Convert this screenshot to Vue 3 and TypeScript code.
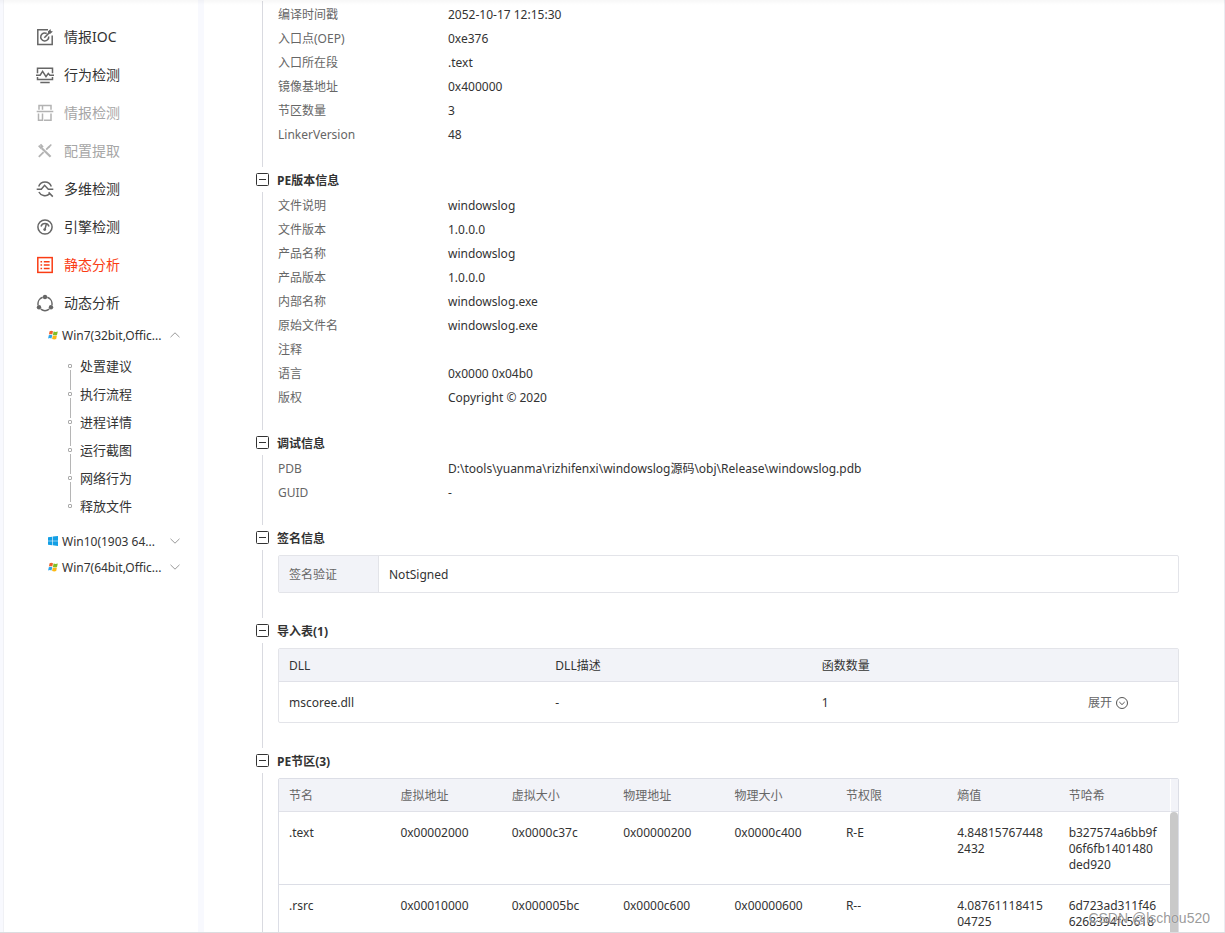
<script setup lang="ts">
import { reactive } from 'vue'

type Pair = [string, string]

interface NavItem {
  label: string
  icon: string
  state?: 'active' | 'disabled'
}

const navItems: NavItem[] = [
  { label: '情报IOC', icon: 'target' },
  { label: '行为检测', icon: 'monitor' },
  { label: '情报检测', icon: 'scan', state: 'disabled' },
  { label: '配置提取', icon: 'tools', state: 'disabled' },
  { label: '多维检测', icon: 'search' },
  { label: '引擎检测', icon: 'gauge' },
  { label: '静态分析', icon: 'list', state: 'active' },
  { label: '动态分析', icon: 'cycle' },
]

const environments = reactive([
  {
    name: 'Win7(32bit,Offic...',
    os: 'win7',
    open: true,
    children: ['处置建议', '执行流程', '进程详情', '运行截图', '网络行为', '释放文件'],
  },
  { name: 'Win10(1903 64...', os: 'win10', open: false, children: [] as string[] },
  { name: 'Win7(64bit,Offic...', os: 'win7', open: false, children: [] as string[] },
])

const basics: Pair[] = [
  ['编译时间戳', '2052-10-17 12:15:30'],
  ['入口点(OEP)', '0xe376'],
  ['入口所在段', '.text'],
  ['镜像基地址', '0x400000'],
  ['节区数量', '3'],
  ['LinkerVersion', '48'],
]

const sections = reactive([
  {
    title: 'PE版本信息',
    kind: 'pairs',
    open: true,
    pairs: [
      ['文件说明', 'windowslog'],
      ['文件版本', '1.0.0.0'],
      ['产品名称', 'windowslog'],
      ['产品版本', '1.0.0.0'],
      ['内部名称', 'windowslog.exe'],
      ['原始文件名', 'windowslog.exe'],
      ['注释', ''],
      ['语言', '0x0000 0x04b0'],
      ['版权', 'Copyright © 2020'],
    ] as Pair[],
  },
  {
    title: '调试信息',
    kind: 'pairs',
    open: true,
    pairs: [
      ['PDB', 'D:\\tools\\yuanma\\rizhifenxi\\windowslog源码\\obj\\Release\\windowslog.pdb'],
      ['GUID', '-'],
    ] as Pair[],
  },
  { title: '签名信息', kind: 'sign', open: true, pairs: [] as Pair[] },
  { title: '导入表(1)', kind: 'imports', open: true, pairs: [] as Pair[] },
  { title: 'PE节区(3)', kind: 'segments', open: true, pairs: [] as Pair[] },
])

const segmentHeads = ['节名', '虚拟地址', '虚拟大小', '物理地址', '物理大小', '节权限', '熵值', '节哈希']
const segments = [
  ['.text', '0x00002000', '0x0000c37c', '0x00000200', '0x0000c400', 'R-E', '4.848157674482432', 'b327574a6bb9f06f6fb1401480ded920'],
  ['.rsrc', '0x00010000', '0x000005bc', '0x0000c600', '0x00000600', 'R--', '4.0876111841504725', '6d723ad311f466268394fc5618'],
]
</script>

<template>
  <div class="page">
    <aside class="sidebar">
      <nav>
        <a v-for="item in navItems" :key="item.label" href="#" class="nav-item" :class="item.state">
          <svg class="nav-icon" viewBox="0 0 18 18" aria-hidden="true">
            <g v-if="item.icon === 'target'">
              <path d="M12 1.800H1.800v14.600h14.400V7.500" />
              <path d="M10.700 5.500A4 4 0 1 0 12.700 8.500" />
              <path d="M8.300 9.800l5.600-5.700" />
              <path class="solid" d="M11.900 3.600l2.600-2.500.4 1.900 2 .5-2.500 2.300-2.100-.3z" />
            </g>
            <g v-else-if="item.icon === 'monitor'">
              <path d="M1.500 7.200V2.200h15v5M1.500 11v2.500h15V11" />
              <path d="M0 9.200h4.100l2.500-3.900 3.400 5.400 2.300-3.300 1.600 1.800H18M4.300 16.500h9.400" />
            </g>
            <g v-else-if="item.icon === 'scan'">
              <path d="M3 5.700V1.500h12v4.200M6.500 1.500v4.200M.7 7.500h16.600M2.500 9.500v6.700h4V9.500M8 16.200h7V9.500" />
            </g>
            <g v-else-if="item.icon === 'tools'">
              <path d="M5.800 6.200l8.800 8.600" stroke-width="2.200" />
              <path d="M2.700 3.700l2.200 2.200 1.500-1.500-2-2.100" stroke-width="1.800" />
              <path d="M7.600 10.200l-4.800 4.600M10.200 7.600l2.700-2.800" stroke-width="1.800" />
              <path class="solid" d="M11.800 4.700l3-2.600 1 1-2.500 3z" />
            </g>
            <g v-else-if="item.icon === 'search'">
              <path d="M2.700 6.500a6.700 6.700 0 0 1 12.600 0M2.900 12a6.800 6.800 0 0 0 10.400 2.200M.7 9.300h4.600l3.300-4 3.700 4h5M12.600 12.400l4.200 4.200" />
            </g>
            <g v-else-if="item.icon === 'gauge'">
              <circle cx="9" cy="9" r="7.100" />
              <path d="M5 8.500A4.200 4.200 0 0 1 13 8.500M10.200 6.500l-1.300 5" />
              <circle class="solid" cx="8.700" cy="11.600" r="1.400" />
            </g>
            <g v-else-if="item.icon === 'list'">
              <rect x="1.800" y="1.600" width="14.400" height="14.800" />
              <path d="M4.500 5.700h1.600M7.800 5.700h5.800M4.500 9h1.600M7.800 9h5.800M4.500 12.400h1.600M7.800 12.400h5.800" />
            </g>
            <g v-else>
              <path d="M6.700 3.200A7 7 0 0 0 2.100 11M11.300 3.200a7 7 0 0 1 4.600 7.800M4.800 15.200a7 7 0 0 0 8.400 0" />
              <circle class="solid" cx="9" cy="3" r="2.200" />
              <circle class="solid" cx="3" cy="13.300" r="2.200" />
              <circle class="solid" cx="15" cy="13.300" r="2.200" />
            </g>
          </svg>
          <span>{{ item.label }}</span>
        </a>

        <div v-for="env in environments" :key="env.name">
          <button type="button" class="env" :aria-expanded="env.open" @click="env.open = !env.open">
            <svg v-if="env.os === 'win7'" class="os" viewBox="0 0 10 10" aria-hidden="true">
              <path fill="#f0632c" d="M1.600 1.200Q3.200.2 5 1.200L4.300 4.500Q2.600 3.600.9 4.500z" />
              <path fill="#82bd25" d="M5.600 1.600q2 .9 4.200 0L9 5Q7 5.800 4.900 4.900z" />
              <path fill="#2ba5ea" d="M.8 5.200q1.700-.9 3.400 0L3.500 8.500Q1.800 7.600.1 8.500z" />
              <path fill="#fcb813" d="M4.800 5.600q2 .9 4.100 0L8.200 9Q6.100 9.800 4.100 8.900z" />
            </svg>
            <svg v-else class="os" viewBox="0 0 10 10" aria-hidden="true">
              <path fill="#139fe5" d="M0 1.300l4.200-.6v4H0zM4.800.6L10 0v4.700H4.800zM0 5.300h4.200v4L0 8.700zM4.800 5.300H10V10l-5.200-.7z" />
            </svg>
            <span class="env-name">{{ env.name }}</span>
            <svg class="chevron" viewBox="0 0 10 6" aria-hidden="true">
              <path :d="env.open ? 'M.5 5.200L5 .8l4.500 4.400' : 'M.5.8L5 5.200 9.500.8'" />
            </svg>
          </button>
          <ul v-if="env.open && env.children.length" class="steps">
            <li v-for="child in env.children" :key="child"><a href="#">{{ child }}</a></li>
          </ul>
        </div>
      </nav>
    </aside>

    <main class="content">
      <section>
        <div class="body">
          <dl>
            <div v-for="[k, v] in basics" :key="k" class="pair"><dt>{{ k }}</dt><dd>{{ v }}</dd></div>
          </dl>
        </div>
      </section>

      <section v-for="s in sections" :key="s.title">
        <h2>
          <button type="button" class="toggle" :aria-expanded="s.open" @click="s.open = !s.open">
            <svg viewBox="0 0 13 13" aria-hidden="true">
              <rect x=".5" y=".5" width="12" height="12" rx="1" />
              <path d="M3 6.500h7" />
              <path v-if="!s.open" d="M6.500 3v7" />
            </svg>
            <span>{{ s.title }}</span>
          </button>
        </h2>
        <div v-if="s.open" class="body" :class="{ boxed: s.kind !== 'pairs' }">
          <dl v-if="s.kind === 'pairs'">
            <div v-for="[k, v] in s.pairs" :key="k" class="pair"><dt>{{ k }}</dt><dd>{{ v }}</dd></div>
          </dl>

          <div v-else-if="s.kind === 'sign'" class="frame">
            <table class="sign">
              <tbody>
                <tr><th scope="row">签名验证</th><td>NotSigned</td></tr>
              </tbody>
            </table>
          </div>

          <div v-else-if="s.kind === 'imports'" class="frame">
            <table class="grid imports">
              <thead>
                <tr><th>DLL</th><th>DLL描述</th><th>函数数量</th><th class="action"></th></tr>
              </thead>
              <tbody>
                <tr>
                  <td>mscoree.dll</td>
                  <td>-</td>
                  <td>1</td>
                  <td>
                    <button type="button" class="expand">
                      展开
                      <svg viewBox="0 0 12 12" aria-hidden="true">
                        <circle cx="6" cy="6" r="5.500" />
                        <path d="M3.300 5l2.700 2.600L8.700 5" />
                      </svg>
                    </button>
                  </td>
                </tr>
              </tbody>
            </table>
          </div>

          <div v-else class="frame segments">
            <table class="grid">
              <thead>
                <tr><th v-for="h in segmentHeads" :key="h">{{ h }}</th></tr>
              </thead>
              <tbody>
                <tr v-for="row in segments" :key="row[0]">
                  <td v-for="(cell, i) in row" :key="i">{{ cell }}</td>
                </tr>
              </tbody>
            </table>
            <div class="rail" aria-hidden="true"><div class="rail-head"></div><div class="thumb"></div></div>
          </div>
        </div>
      </section>
    </main>
    <div class="watermark">CSDN @lschou520</div>
  </div>
</template>

<style>
body {
  background: #fff;
}
</style>

<style scoped>
* {
  box-sizing: border-box;
}
.page {
  position: relative;
  display: flex;
  height: 100vh;
  overflow: hidden;
  background: #f8f9fe;
  border-bottom: 1px solid #dcdde0;
  color: #333;
  font: 12px/16px "Noto Sans", "Noto Sans CJK SC", sans-serif;
}
.page::before {
  content: "";
  position: absolute;
  inset: 0 0 auto;
  height: 5px;
  background: linear-gradient(rgba(0, 0, 0, 0.03), transparent);
}
a {
  color: inherit;
  text-decoration: none;
}
button {
  padding: 0;
  border: 0;
  background: none;
  color: inherit;
  font: inherit;
  text-align: left;
  cursor: pointer;
}
svg {
  flex: none;
  fill: none;
}

/* Sidebar */
.sidebar {
  flex: none;
  width: 195px;
  margin: 0 6px 0 3px;
  padding-top: 18px;
  border-left: 1px solid #f0f1f5;
  background: #fff;
}
.nav-item {
  display: flex;
  align-items: center;
  gap: 10px;
  height: 38px;
  padding-left: 32px;
  font-size: 14px;
}
.nav-icon {
  width: 18px;
  height: 18px;
  color: #666;
  stroke: currentColor;
  stroke-width: 1.5;
}
.solid {
  fill: currentColor;
  stroke: none;
}
.disabled {
  color: #a6a6a6;
}
.disabled .nav-icon {
  color: #b3b3b3;
}
.active,
.active .nav-icon {
  color: #fa3c14;
}
.env {
  display: flex;
  align-items: center;
  gap: 4px;
  width: 100%;
  height: 26px;
  padding: 0 18px 0 44px;
}
.os {
  width: 10px;
  height: 10px;
}
.env-name {
  flex: 1;
  padding-top: 2px;
  white-space: nowrap;
}
.chevron {
  width: 10px;
  height: 6px;
  stroke: #999;
}
.steps {
  margin: 0;
  padding: 4px 0 8px 64px;
  list-style: none;
  font-size: 13px;
}
.steps li {
  position: relative;
  height: 28px;
  padding-left: 12px;
  line-height: 28px;
}
.steps li::before {
  content: "";
  position: absolute;
  left: 0;
  top: 12px;
  box-sizing: border-box;
  width: 4px;
  height: 4px;
  border: 1px solid #aaa;
  border-radius: 1px;
}
.steps li:not(:last-child)::after {
  content: "";
  position: absolute;
  left: 2px;
  top: 18px;
  width: 1px;
  height: 20px;
  background: #b5b5b5;
}

/* Report */
.content {
  flex: 1;
  min-width: 0;
  padding: 1px 45px 0 52px;
  border-right: 1px solid #ebecf2;
  background: #fff;
}
h2 {
  display: flex;
  align-items: center;
  height: 25px;
  margin: 0;
  font-size: 12px;
  font-weight: 700;
}
.toggle {
  display: flex;
  align-items: center;
  gap: 8px;
}
.toggle span {
  padding-top: 2px;
}
.toggle svg {
  width: 13px;
  height: 13px;
  stroke: #333;
}
.body {
  margin-left: 6px;
  padding: 2px 0 20px 15px;
  border-left: 1px solid #d9dae0;
}
.boxed {
  padding: 5px 0 25px 15px;
}
dl {
  margin: 0;
}
.pair {
  display: flex;
  line-height: 24px;
  height: 24px;
}
dt {
  width: 170px;
  color: #666;
}
dd {
  margin: 0;
}
.frame {
  border: 1px solid #e3e4e9;
  border-radius: 2px;
}
table {
  width: 100%;
  border-collapse: separate;
  border-spacing: 0;
  table-layout: fixed;
}
th,
td {
  padding: 2px 10px 0;
  text-align: left;
  font-weight: 400;
}
.sign th {
  width: 100px;
  height: 36px;
  border-right: 1px solid #e3e4e9;
  background: #f2f3f8;
  color: #666;
}
.grid th {
  height: 33px;
  border-bottom: 1px solid #e0e1e8;
  background: #f2f3f8;
}
.imports td {
  height: 40px;
}
.action {
  width: 100px;
}
.expand {
  display: flex;
  align-items: center;
  gap: 4px;
  color: #666;
}
.expand svg {
  width: 12px;
  height: 12px;
  stroke: #555;
}
.segments {
  display: flex;
  border-color: #dcdee6;
}
.segments .grid {
  flex: 1;
  min-width: 0;
}
.segments th {
  color: #666;
}
.segments td {
  height: 73px;
  padding: 13px 10px 11px;
  border-bottom: 1px solid #dcdee6;
  vertical-align: top;
  word-break: break-all;
}
.rail {
  display: flex;
  flex-direction: column;
  width: 8px;
}
.rail-head {
  height: 33px;
  border-bottom: 1px solid #dcdee6;
  border-left: 1px solid #fff;
  background: #f2f3f8;
}
.thumb {
  flex: 1;
  border-radius: 4px;
  background: #c9c9c9;
}
.watermark {
  position: absolute;
  right: 15px;
  bottom: 5px;
  color: rgba(110, 110, 110, 0.7);
  font: 14px/18px "Liberation Sans", sans-serif;
  text-shadow: 0 0 1px #fff;
}
</style>
